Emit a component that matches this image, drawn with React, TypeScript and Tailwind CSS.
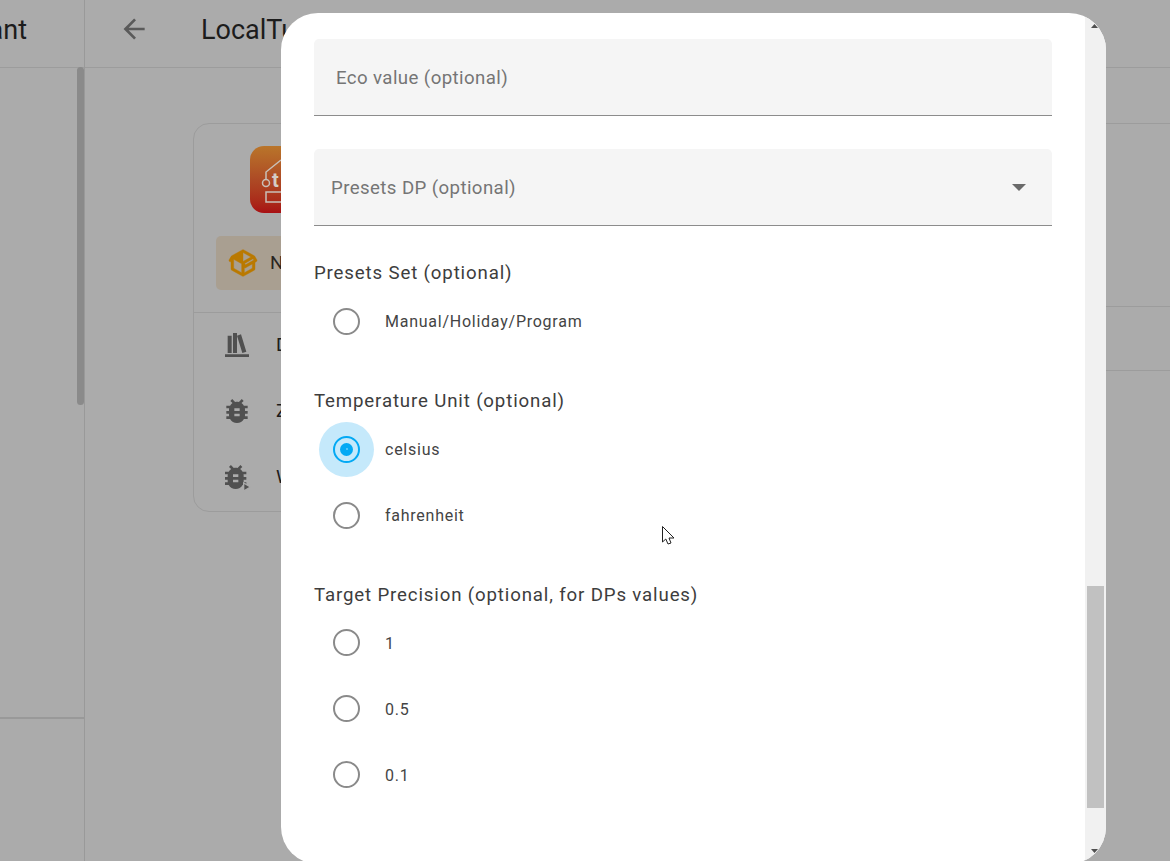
const roboto = "font-['Roboto',sans-serif]";

const BUG_PATH =
    "M14,12H10V10H14M14,16H10V14H14M20,8H17.19C16.74,7.22 16.12,6.55 15.37,6.04L17,4.41L15.59,3L13.42,5.17C12.96,5.06 12.5,5 12,5C11.5,5 11.04,5.06 10.59,5.17L8.41,3L7,4.41L8.62,6.04C7.88,6.55 7.26,7.22 6.81,8H4V10H6.09C6.04,10.33 6,10.66 6,11V12H4V14H6V15C6,15.34 6.04,15.67 6.09,16H4V18H6.81C7.85,19.79 9.78,21 12,21C14.22,21 16.15,19.79 17.19,18H20V16H17.91C17.96,15.67 18,15.34 18,15V14H20V12H18V11C18,10.66 17.96,10.33 17.91,10H20V8Z";

function Radio({ label, checked = false, textClass }: { label: string; checked?: boolean; textClass: string }) {
    return (
        <div className="flex items-center h-[66px]">
            <div className="flex items-center justify-center w-[65px] h-[55px]">
                <div
                    className={`flex items-center justify-center w-[55px] h-[55px] rounded-full ${
                        checked ? "bg-[#c5e9fb]" : ""
                    }`}
                >
                    <div
                        className={`flex items-center justify-center w-[27px] h-[27px] rounded-full border-2 ${
                            checked ? "border-[#03a9f4]" : "border-[#8a8a8a]"
                        }`}
                    >
                        {checked && (
                            <div className="flex items-center justify-center w-[13px] h-[13px] rounded-full bg-[#03a9f4]">
                                <div className="w-[2px] h-[2px] rounded-full bg-[#6cccf8]" />
                            </div>
                        )}
                    </div>
                </div>
            </div>
            <span className={`ml-[6px] text-[16px] tracking-[0.75px] text-[#444444] ${textClass}`}>{label}</span>
        </div>
    );
}

function RadioGroup({
    title,
    options,
    checked,
    rowsClass = "mt-[4px]",
    textClass = "pt-[1px]",
}: {
    title: string;
    options: string[];
    checked?: string;
    rowsClass?: string;
    textClass?: string;
}) {
    return (
        <div className="mt-[34px]">
            <div className="h-[24px] leading-[24px] pt-[1px] text-[18.67px] tracking-[0.85px] text-[#3d3d3d] whitespace-nowrap">
                {title}
            </div>
            <div className={rowsClass}>
                {options.map((o) => (
                    <Radio key={o} label={o} checked={o === checked} textClass={textClass} />
                ))}
            </div>
        </div>
    );
}

function Field({ label, select = false }: { label: string; select?: boolean }) {
    return (
        <div
            className={`flex items-center justify-between h-[77px] bg-[#f5f5f5] rounded-t-[5px] border-b border-[#8c8c8c] ${
                select ? "pl-[17px] pr-[26px]" : "pl-[22px] pr-[26px]"
            }`}
        >
            <span className="pt-[2px] text-[18.67px] tracking-[0.4px] text-[#757575]">{label}</span>
            {select && (
                <svg width="14" height="7" viewBox="0 0 14 7">
                    <path d="M0 0H14L7 7Z" fill="#6a6a6a" />
                </svg>
            )}
        </div>
    );
}

function CardRow({ icon, label }: { icon: React.ReactNode; label: string }) {
    return (
        <div className="flex items-center h-[66px]">
            <div className="w-[32px] h-[32px]">{icon}</div>
            <span className="ml-[23px] text-[19px] text-[#1c1c1c]">{label}</span>
        </div>
    );
}

export default function App() {
    return (
        <div className={`relative w-[1170px] h-[861px] overflow-hidden bg-[#ababab] ${roboto}`}>
            {/* page behind the scrim */}
            <div className="flex h-full">
                <aside className="relative w-[85px] shrink-0 border-r border-[#999999]">
                    <div className="flex items-center h-[68px] border-b border-[#9c9c9c]">
                        <div className="flex justify-end w-[27px] overflow-hidden whitespace-nowrap text-[27px] text-[#1c1c1c] pb-[6px]">
                            Home Assistant
                        </div>
                    </div>
                    <div className="h-[651px] border-b-2 border-[#999999]" />
                    <div className="absolute right-0 top-[67px] w-[7px] h-[338px] rounded-full bg-[#8a8a8a]" />
                </aside>

                <main className="flex-1 min-w-0">
                    <header className="flex items-center h-[68px] border-b border-[#9c9c9c] pl-[33px]">
                        <svg width="32" height="32" viewBox="0 0 24 24" fill="#5a5a5a" className="mb-[10px]">
                            <path d="M20,11V13H8L13.5,18.5L12.08,19.92L4.16,12L12.08,4.08L13.5,5.5L8,11H20Z" />
                        </svg>
                        <h1 className="ml-[51px] mb-[7px] text-[27px] text-[#1c1c1c] whitespace-nowrap">LocalTuya</h1>
                    </header>

                    <div className="flex pt-[55px] pl-[108px]">
                        <section className="w-[440px] h-[389px] shrink-0 rounded-[16px] border border-[#9c9c9c]">
                            <div className="pl-[22px] pt-[22px] pr-[22px]">
                                <div className="ml-[34px] w-[67px] h-[67px] rounded-[14px] bg-gradient-to-b from-[#b9752a] via-[#ad4a25] to-[#a80f14]">
                                    <svg width="67" height="67" viewBox="0 0 67 67" fill="none" stroke="#c9c0b8" strokeWidth="1.5">
                                        <path d="M16 33V26L31 14" />
                                        <circle cx="16" cy="37" r="3.5" />
                                        <rect x="16" y="46" width="30" height="10" />
                                        <text x="22" y="41" fill="#d4ccc4" stroke="none" fontSize="20" fontWeight="700">t</text>
                                    </svg>
                                </div>
                                <div className="flex items-center h-[54px] mt-[23px] rounded-[5px] bg-[#a99f91] pl-[11px]">
                                    <svg width="32" height="32" viewBox="0 0 24 24" fill="#ba7900" stroke="#ba7900" strokeWidth="0.3">
                                        <path d="M2,10.96C1.5,10.68 1.35,10.07 1.63,9.59L3.13,7C3.24,6.8 3.41,6.66 3.6,6.58L11.43,2.18C11.59,2.06 11.79,2 12,2C12.21,2 12.41,2.06 12.57,2.18L20.47,6.62C20.66,6.72 20.82,6.88 20.91,7.08L22.36,9.6C22.64,10.08 22.47,10.69 22,10.96L21,11.54V16.5C21,16.88 20.79,17.21 20.47,17.38L12.57,21.82C12.41,21.94 12.21,22 12,22C11.79,22 11.59,21.94 11.43,21.82L3.53,17.38C3.21,17.21 3,16.88 3,16.5V10.96C2.7,11.13 2.32,11.14 2,10.96M12,4.15V4.15L12,10.85V10.85L17.96,7.5L12,4.15M5,15.91L11,19.29V12.58L5,9.21V15.91M19,15.91V12.69L14,15.59C13.67,15.77 13.29,15.76 13,15.6V19.29L19,15.91M13.85,13.36L20.13,9.73L19.55,8.72L13.27,12.35L13.85,13.36Z" />
                                    </svg>
                                    <span className="ml-[11px] text-[19px] text-[#2a2420]">N</span>
                                </div>
                            </div>
                            <div className="mt-[22px] border-t border-[#9c9c9c] pl-[27px]">
                                <div className="-mt-[1px]">
                                    <CardRow
                                        label="D"
                                        icon={
                                            <svg width="32" height="32" viewBox="0 0 24 24" fill="#505050">
                                                <path d="M9 3V18H12V3H9M12 5L16 18L19 17L15 4L12 5M5 5V18H8V5H5M3 19V21H21V19H3Z" />
                                            </svg>
                                        }
                                    />
                                    <CardRow
                                        label="Z"
                                        icon={
                                            <svg width="32" height="32" viewBox="0 0 24 24" fill="#505050">
                                                <path d={BUG_PATH} />
                                            </svg>
                                        }
                                    />
                                    <CardRow
                                        label="W"
                                        icon={
                                            <svg width="32" height="32" viewBox="0 0 24 24" fill="#505050">
                                                <g transform="translate(-1 0)">
                                                    <path d={BUG_PATH} />
                                                </g>
                                                <path d="M17 16.5V22.5L22 19.5Z" fill="#505050" stroke="#ababab" strokeWidth="1" />
                                            </svg>
                                        }
                                    />
                                </div>
                            </div>
                        </section>
                        <section className="flex-1 ml-[30px] h-[248px] border-t border-[#9c9c9c]">
                            <div className="mt-[182px] h-[65px] border-y border-[#9c9c9c]" />
                        </section>
                    </div>
                </main>
            </div>

            {/* dialog */}
            <div className="absolute left-[281px] top-[13px] flex w-[825px] h-[851px] rounded-[37px] overflow-hidden bg-white">
                <div className="w-[804px] shrink-0 pt-[26px] pl-[33px] pr-[33px]">
                    <Field label="Eco value (optional)" />
                    <div className="mt-[33px]">
                        <Field label="Presets DP (optional)" select />
                    </div>
                    <RadioGroup title="Presets Set (optional)" options={["Manual/Holiday/Program"]} />
                    <RadioGroup title="Temperature Unit (optional)" options={["celsius", "fahrenheit"]} checked="celsius" />
                    <RadioGroup
                        title="Target Precision (optional, for DPs values)"
                        options={["1", "0.5", "0.1"]}
                        rowsClass="mt-[3.9px]"
                        textClass="pt-[3px]"
                    />
                </div>
                <div className="flex flex-col items-center w-[21px] bg-[#f1f1f1]">
                    <svg width="7" height="4" viewBox="0 0 7 4" className="mt-[11px] mr-[2px]">
                        <path d="M0 4H7L3.5 0Z" fill="#505050" />
                    </svg>
                    <div className="mt-[558px] w-[17px] h-[222px] bg-[#c1c1c1]" />
                    <svg width="7" height="4" viewBox="0 0 7 4" className="mt-[41px] mr-[2px]">
                        <path d="M0 0H7L3.5 4Z" fill="#505050" />
                    </svg>
                </div>
            </div>

            {/* mouse pointer */}
            <svg width="14" height="20" viewBox="0 0 14 20" className="absolute left-[662px] top-[526px]">
                <path d="M0.5 0.5V16L3.8 13L6 18L9 17L7 12H12Z" fill="white" stroke="#222222" strokeWidth="1" />
            </svg>
        </div>
    );
}
